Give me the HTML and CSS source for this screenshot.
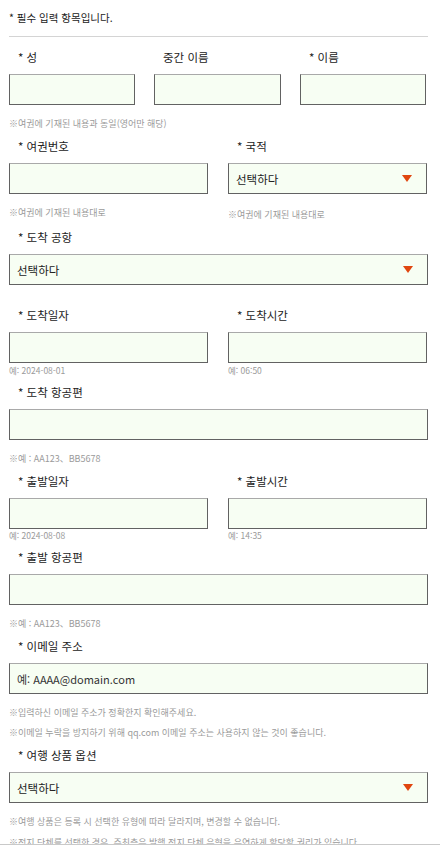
FILE: index.html
```html
<!DOCTYPE html>
<html lang="ko">
<head>
<meta charset="utf-8">
<title>입력 양식</title>
<link rel="stylesheet" href="styles.css">
</head>
<body>
<form class="page">
  <p class="required-note">* 필수 입력 항목입니다.</p>
  <hr class="divider">

  <div class="section first">
    <div class="grid3">
      <div class="field"><div class="label">* 성</div><div class="input"></div></div>
      <div class="field"><div class="label">중간 이름</div><div class="input"></div></div>
      <div class="field"><div class="label">* 이름</div><div class="input"></div></div>
    </div>
    <p class="hint">※여권에 기재된 내용과 동일(영어만 해당)</p>
  </div>

  <div class="section">
    <div class="grid2">
      <div class="field"><div class="label">* 여권번호</div><div class="input"></div></div>
      <div class="field"><div class="label">* 국적</div><div class="input select"><span>선택하다</span><i class="caret"></i></div></div>
    </div>
    <div class="grid2">
      <p class="hint">※여권에 기재된 내용대로</p>
      <p class="hint lower">※여권에 기재된 내용대로</p>
    </div>
  </div>

  <div class="section">
    <div class="label">* 도착 공항</div>
    <div class="input select"><span>선택하다</span><i class="caret"></i></div>
  </div>

  <div class="section after-select">
    <div class="grid2">
      <div class="field"><div class="label">* 도착일자</div><div class="input"></div><p class="example">예: 2024-08-01</p></div>
      <div class="field"><div class="label">* 도착시간</div><div class="input"></div><p class="example">예: 06:50</p></div>
    </div>
  </div>

  <div class="section after-example">
    <div class="label">* 도착 항공편</div>
    <div class="input"></div>
    <p class="hint">※예 : AA123、BB5678</p>
  </div>

  <div class="section">
    <div class="grid2">
      <div class="field"><div class="label">* 출발일자</div><div class="input"></div><p class="example tight">예: 2024-08-08</p></div>
      <div class="field"><div class="label">* 출발시간</div><div class="input"></div><p class="example tight">예: 14:35</p></div>
    </div>
  </div>

  <div class="section after-example">
    <div class="label">* 출발 항공편</div>
    <div class="input"></div>
    <p class="hint">※예 : AA123、BB5678</p>
  </div>

  <div class="section">
    <div class="label">* 이메일 주소</div>
    <div class="input"><span class="placeholder">예: AAAA@domain.com</span></div>
    <p class="hint">※입력하신 이메일 주소가 정확한지 확인해주세요.</p>
    <p class="hint">※이메일 누락을 방지하기 위해 qq.com 이메일 주소는 사용하지 않는 것이 좋습니다.</p>
  </div>

  <div class="section">
    <div class="label">* 여행 상품 옵션</div>
    <div class="input select"><span>선택하다</span><i class="caret"></i></div>
    <p class="hint wide">※여행 상품은 등록 시 선택한 유형에 따라 달라지며, 변경할 수 없습니다.</p>
    <p class="hint wide">※정지 단체를 선택한 경우, 주최측은 발행 정지 단체 유형을 유연하게 할당할 권리가 있습니다.</p>
  </div>
</form>
<div class="bottom-bar"></div>
</body>
</html>
```

FILE: styles.css
```css
html, body {
  margin: 0;
  padding: 0;
  background: #ffffff;
}

body {
  font-family: "Noto Sans CJK KR", "Noto Sans", sans-serif;
  color: #222222;
}

.page {
  width: 419px;
  padding: 0 0 40px 9px;
}

p {
  margin: 0;
}

.required-note {
  padding-top: 10px;
  font-size: 10.5px;
  line-height: 16px;
  color: #222222;
}

.divider {
  margin: 10px 0 0 0;
  border: 0;
  border-top: 1px solid #d4d4d4;
  height: 0;
}

.section {
  margin-top: 8px;
}

.section.first {
  margin-top: 12px;
}

.section.after-select {
  margin-top: 22px;
}

.section.after-example {
  margin-top: 9px;
}

.grid3 {
  display: grid;
  grid-template-columns: 126px 127px 126px;
  column-gap: 19px;
  width: 418px;
}

.grid2 {
  display: grid;
  grid-template-columns: 199px 199px;
  column-gap: 20px;
  width: 418px;
}

.label {
  height: 17px;
  margin: 0 0 8px 9px;
  font-size: 11.5px;
  line-height: 17px;
  color: #222222;
  white-space: nowrap;
}

.input {
  box-sizing: border-box;
  height: 31px;
  border: 1px solid #626262;
  border-top-color: #a9a9a9;
  background: #f7fef3;
  display: flex;
  align-items: center;
  padding: 0 14px 0 7px;
}

.grid3 .input,
.grid2 .input {
  width: 100%;
}

.select {
  justify-content: space-between;
  font-size: 11.5px;
  color: #222222;
}

.caret {
  display: block;
  width: 0;
  height: 0;
  border-left: 5px solid transparent;
  border-right: 5px solid transparent;
  border-top: 7px solid #e0460f;
}

.placeholder {
  font-size: 11px;
  color: #333333;
}

.hint {
  margin-top: 13px;
  font-size: 9px;
  line-height: 12px;
  color: #9a9a9a;
  white-space: nowrap;
}

.hint + .hint {
  margin-top: 8px;
}

.hint.lower {
  margin-top: 15px;
}

.hint.wide + .hint.wide {
  margin-top: 9px;
}

.example {
  margin-top: 2px;
  font-size: 8.5px;
  line-height: 10px;
  color: #9a9a9a;
}

.example.tight {
  margin-top: 1px;
}

.bottom-bar {
  position: fixed;
  left: 0;
  right: 0;
  bottom: 0;
  height: 6px;
  background: #ffffff;
  border-top: 1px solid #c9c9c9;
}
```
